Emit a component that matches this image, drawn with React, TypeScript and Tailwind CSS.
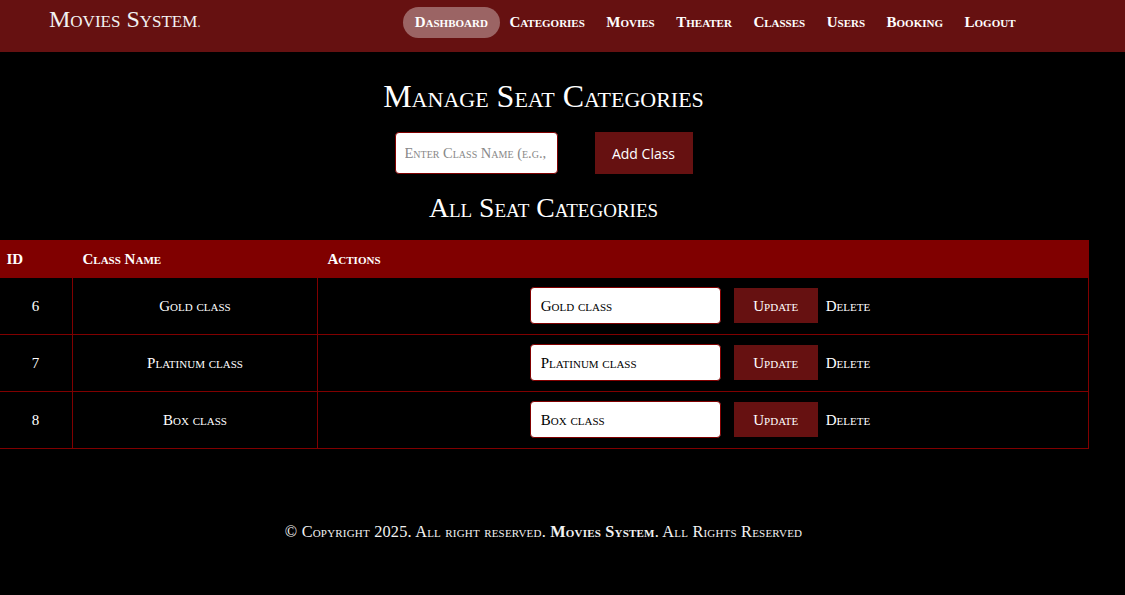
import React from "react";

const serif = "font-['Liberation_Serif','DejaVu_Serif',serif] [font-variant:small-caps]";

const navItems = ["Dashboard", "Categories", "Movies", "Theater", "Classes", "Users", "Booking", "Logout"];

const rows = [
  { id: 6, name: "Gold class" },
  { id: 7, name: "Platinum class" },
  { id: 8, name: "Box class" },
];

export default function App() {
  return (
    <div className={`min-h-[595px] w-[1125px] bg-black text-white ${serif}`}>
      <header className="h-[52px] bg-[#661111] flex items-start">
        <div className="pl-[49px] pt-[4px] text-[24px] leading-[30px] text-[#f2f2f2]">
          Movies System<span className="text-[#bbbbbb] text-[14px]">.</span>
        </div>
        <nav className="ml-auto mr-[100px] mt-[7px] flex items-center">
          {navItems.map((n, i) => (
            <a
              key={n}
              className={`px-3 h-[31px] flex items-center rounded-full font-bold text-[15px] text-white mr-[-2.5px] ${
                i === 0 ? "bg-[rgba(255,255,255,0.35)]" : ""
              }`}
            >
              {n}
            </a>
          ))}
        </nav>
      </header>

      <main className="w-[1087px] flex flex-col items-center">
        <h1 className="mt-[25px] text-[32px] leading-[38px]">Manage Seat Categories</h1>
        <div className="mt-[17px] flex items-center gap-[37px]">
          <input
            className={`w-[163px] h-[42px] rounded-[4px] border border-[#800000] bg-white px-[9px] text-[14.5px] text-black placeholder:text-[#888] outline-none ${serif}`}
            placeholder="Enter Class Name (e.g., Gold)"
          />
          <button className="w-[98px] h-[42px] bg-[#661111] text-white text-[14px] font-['Open_Sans',sans-serif] [font-variant:normal]">
            Add Class
          </button>
        </div>
        <h2 className="mt-[19px] text-[27.7px] leading-[30px]">All Seat Categories</h2>

        <table className="mt-[17px] ml-[-2px] w-[1091px] self-start border-collapse text-[15px]">
          <thead>
            <tr className="bg-[#800000] h-[37px]">
              <th className="w-[74px] text-left pl-[8px] pt-[2px] font-bold">ID</th>
              <th className="w-[245px] text-left pl-[10px] pt-[2px] font-bold">Class Name</th>
              <th className="text-left pl-[10px] pt-[2px] font-bold">Actions</th>
            </tr>
          </thead>
          <tbody>
            {rows.map((r) => (
              <tr key={r.id} className="h-[57px] border border-[#800000]">
                <td className="text-center border-r border-[#800000] pt-[2px]">{r.id}</td>
                <td className="text-center border-r border-[#800000] pt-[2px]">{r.name}</td>
                <td>
                  <div className="flex items-center justify-center pr-[6px]">
                    <input
                      className={`w-[191px] h-[37px] rounded-[4px] border border-[#800000] bg-white px-[10px] pt-[2px] text-[15px] text-black outline-none ${serif}`}
                      defaultValue={r.name}
                    />
                    <button className={`ml-[13px] w-[84px] h-[35px] pt-[2px] bg-[#661111] text-white text-[15px] ${serif}`}>
                      Update
                    </button>
                    <button className={`ml-[8px] pt-[2px] text-white text-[15px] ${serif}`}>Delete</button>
                  </div>
                </td>
              </tr>
            ))}
          </tbody>
        </table>

        <footer className="mt-[71px] text-[16.3px] tracking-[0.2px] text-[#f2f2f2]">
          © Copyright 2025. All right reserved. <b className="font-bold">Movies System</b>. All Rights Reserved
        </footer>
      </main>
    </div>
  );
}
